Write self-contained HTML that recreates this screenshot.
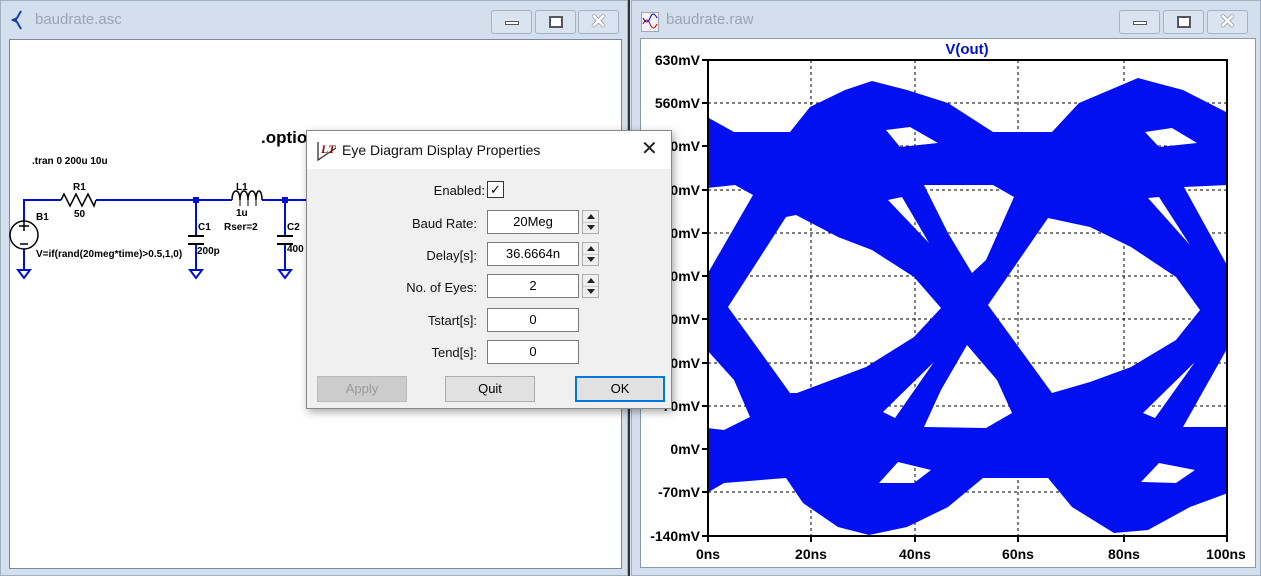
<!DOCTYPE html>
<html><head><meta charset="utf-8"><style>
*{margin:0;padding:0;box-sizing:border-box}
body{width:1261px;height:576px;overflow:hidden;background:#d5e1ee;font-family:"Liberation Sans",sans-serif;position:relative}
.win{position:absolute;top:0;height:576px;background:#d3dfec;border:1px solid #9fb0c3}
.title{position:absolute;top:10px;font-size:15px;color:#9aa5b2}
.btn{position:absolute;top:9px;width:41px;height:24px;border:1px solid #a3b2c4;border-radius:3px;background:#d9e4f0}
.client{position:absolute;background:#fff;border:1px solid #7a8a9a}
.lbl{position:absolute;font-size:13px;color:#111;text-align:right;width:170px;left:0}
.inp{position:absolute;left:180px;width:92px;height:24px;background:#fff;border:1px solid #7a7a7a;font-size:13px;text-align:center;line-height:22px}
.spin{position:absolute;left:275px;width:17px;height:24px;border:1px solid #adadad;background:#f0f0f0}
.spin:before{content:"";position:absolute;left:4px;top:3px;border:4px solid transparent;border-bottom:5px solid #222;border-top:0}
.spin:after{content:"";position:absolute;left:4px;bottom:3px;border:4px solid transparent;border-top:5px solid #222;border-bottom:0}
.spin i{position:absolute;left:0;right:0;top:11px;border-top:1px solid #ccc}
.db{position:absolute;top:245px;width:90px;height:26px;border:1px solid #adadad;background:#e1e1e1;font-size:13px;text-align:center;line-height:24px}
.yl{position:absolute;right:561px;font:bold 14px "Liberation Sans",sans-serif;color:#000}
.xl{position:absolute;top:546px;font:bold 14px "Liberation Sans",sans-serif;color:#000;width:60px;text-align:center}
</style></head><body>

<!-- left window -->
<div class="win" style="left:0;width:628px">
 <svg style="position:absolute;left:10px;top:9px" width="16" height="20"><path d="M10 1 L6 8 L2 10 L6 12 L10 19" stroke="#1a3fb0" stroke-width="2" fill="none"/><path d="M1 10h5" stroke="#1a3fb0" stroke-width="2"/></svg>
 <div class="title" style="left:34px">baudrate.asc</div>
 <div class="btn" style="left:490px"><div style="position:absolute;left:13px;top:10px;width:14px;height:4px;border:1px solid #556;background:#fff"></div></div>
 <div class="btn" style="left:534px"><div style="position:absolute;left:13px;top:5px;width:14px;height:12px;border:2px solid #556;background:#fff"></div></div>
 <div class="btn" style="left:577px;font-size:20px;font-weight:bold;color:#fff;text-align:center;line-height:22px;text-shadow:0 0 1px #334,0 0 1px #334">✕</div>
 <div class="client" style="left:8px;top:38px;width:613px;height:530px"></div>
</div>
<svg width="621" height="568" style="position:absolute;left:0;top:0">
  <g stroke="#0010d0" stroke-width="2" fill="none">
   <path d="M24 221 V200 H61 M96 200 H232 M262 200 H310"/>
   <path d="M24 249 V270 M196 200 V236 M196 244 V270 M285 200 V236 M285 244 V270"/>
   <path d="M18 270 h12 l-6 8 z M190 270 h12 l-6 8 z M279 270 h12 l-6 8 z"/>
  </g>
  <path d="M61 200 l3 -6 l6 12 l6 -12 l6 12 l6 -12 l6 12 l2 -6" stroke="#000" stroke-width="1.5" fill="none"/>
  <path d="M232 200 c0 -12 8 -12 8 0 c0 -12 8 -12 8 0 c0 -12 8 -12 8 0 c0 -12 6 -12 6 0" stroke="#000" stroke-width="1.5" fill="none"/>
  <path d="M240 200 v6 M248 200 v6 M256 200 v6" stroke="#000" stroke-width="1"/>
  <circle cx="24" cy="235" r="14" stroke="#000" stroke-width="1.5" fill="none"/>
  <path d="M19 226h10M24 221v10M20 244h8" stroke="#000" stroke-width="1.5"/>
  <path d="M188 236h16M188 244h16M277 236h16M277 244h16" stroke="#000" stroke-width="2"/>
  <rect x="193" y="197" width="6" height="6" fill="#0010d0"/><rect x="282" y="197" width="6" height="6" fill="#0010d0"/>
  <g font-family="Liberation Sans" font-weight="bold" font-size="10" fill="#000">
   <text x="32" y="164">.tran 0 200u 10u</text>
   <text x="73" y="190">R1</text><text x="74" y="217">50</text>
   <text x="36" y="220">B1</text>
   <text x="236" y="190">L1</text><text x="236" y="216">1u</text><text x="224" y="230">Rser=2</text>
   <text x="198" y="230">C1</text><text x="197" y="254">200p</text>
   <text x="287" y="230">C2</text><text x="287" y="252">400</text>
   <text x="36" y="257">V=if(rand(20meg*time)&gt;0.5,1,0)</text>
   <text x="261" y="143" font-size="17">.optio</text>
  </g>
</svg>
<div style="position:absolute;left:628px;top:0;width:2px;height:576px;background:#333"></div>

<!-- right window -->
<div class="win" style="left:631px;width:630px">
 <svg style="position:absolute;left:9px;top:11px" width="18" height="20"><rect x="0.5" y="0.5" width="17" height="19" fill="#f3f3f8" stroke="#666" stroke-dasharray="1 1"/><path d="M2 12 q4 -8 7 0 t7 0" stroke="#c00" fill="none"/><path d="M2 6 q4 8 7 0 t7 0" stroke="#00c" fill="none"/></svg>
 <div class="title" style="left:34px">baudrate.raw</div>
 <div class="btn" style="left:487px"><div style="position:absolute;left:13px;top:10px;width:14px;height:4px;border:1px solid #556;background:#fff"></div></div>
 <div class="btn" style="left:531px"><div style="position:absolute;left:13px;top:5px;width:14px;height:12px;border:2px solid #556;background:#fff"></div></div>
 <div class="btn" style="left:575px;font-size:20px;font-weight:bold;color:#fff;text-align:center;line-height:22px;text-shadow:0 0 1px #334,0 0 1px #334">✕</div>
</div>
<div class="client" style="left:640px;top:38px;width:616px;height:530px;border-color:#8a9aa8"></div>

<svg style="position:absolute;left:0;top:0" width="1261" height="576">
 <g stroke="#000" stroke-width="1" stroke-dasharray="3 3">
  <path d="M811 60V536M915 60V536M1018 60V536M1124 60V536"/>
  <path d="M708 103H1227M708 146H1227M708 190H1227M708 233H1227M708 276H1227M708 319H1227M708 363H1227M708 406H1227M708 449H1227M708 492H1227"/>
 </g>
 <path fill="#0010f0" fill-rule="evenodd" d="
 M707 117 L734 132 L790 132 L810 107 L845 90 L872 81 L907 90 L948 103 L993 132 L1052 132 L1079 103 L1138 78 L1183 90 L1228 113
 L1228 493 L1190 507 L1148 530 L1114 533 L1072 507 L1048 478 L983 478 L948 507 L907 527 L869 535 L838 527 L803 503 L786 478 L724 483 L707 493 Z
 M728 307 L786 217 L796 215 L838 237 L872 250 L914 277 L941 308 L914 337 L866 367 L797 393 L790 393 Z
 M988 305 L1048 218 L1090 227 L1131 247 L1176 277 L1200 310 L1176 340 L1131 367 L1090 382 L1052 393 Z
 M924 185 L993 185 L1014 197 L986 260 L972 273 L948 233 Z
 M967 345 L997 380 L1012 413 L986 428 L924 427 L941 390 Z
 M888 200 L902 197 L929 243 Z M883 412 L934 362 L895 418 Z
 M1148 198 L1159 197 L1190 245 Z M1143 413 L1195 362 L1155 418 Z
 M707 188 L735 185 L753 195 L708 273 Z
 M707 350 L734 380 L750 417 L724 430 L707 428 Z
 M1184 187 L1228 185 L1228 267 Z
 M1228 347 L1228 427 L1183 427 Z
 M886 130 L910 127 L938 143 L900 147 Z M1145 132 L1172 128 L1197 143 L1159 147 Z
 M879 483 L898 462 L931 470 L914 483 Z M1141 482 L1159 463 L1195 470 L1176 483 Z"/>
 <rect x="708" y="60" width="519" height="476" fill="none" stroke="#000" stroke-width="2"/>
 <g stroke="#000" stroke-width="2">
  <path d="M702 60h6M702 103h6M702 146h6M702 190h6M702 233h6M702 276h6M702 319h6M702 363h6M702 406h6M702 449h6M702 492h6M702 536h6"/>
  <path d="M708 536v6M811 536v6M915 536v6M1018 536v6M1124 536v6M1227 536v6"/>
 </g>
 <text x="967" y="54" font-family="Liberation Sans" font-weight="bold" font-size="15" fill="#0010d0" text-anchor="middle">V(out)</text>
</svg>
<div class="yl" style="top:52px">630mV</div><div class="yl" style="top:95px">560mV</div>
<div class="yl" style="top:138px">490mV</div><div class="yl" style="top:182px">420mV</div>
<div class="yl" style="top:225px">350mV</div><div class="yl" style="top:268px">280mV</div>
<div class="yl" style="top:311px">210mV</div><div class="yl" style="top:355px">140mV</div>
<div class="yl" style="top:398px">70mV</div><div class="yl" style="top:441px">0mV</div>
<div class="yl" style="top:484px">-70mV</div><div class="yl" style="top:528px">-140mV</div>
<div class="xl" style="left:678px">0ns</div><div class="xl" style="left:781px">20ns</div><div class="xl" style="left:885px">40ns</div><div class="xl" style="left:988px">60ns</div><div class="xl" style="left:1094px">80ns</div><div class="xl" style="left:1196px">100ns</div>

<!-- dialog -->
<div style="position:absolute;left:306px;top:130px;width:366px;height:279px;background:#f0f0f0;border:1px solid #888;box-shadow:2px 3px 8px rgba(0,0,0,.35)">
 <div style="position:absolute;left:0;top:0;width:364px;height:38px;background:#fff">
  <svg style="position:absolute;left:9px;top:9px" width="22" height="22"><path d="M2 2 V20 L20 8" stroke="#333" stroke-width="1.3" fill="none"/><text x="5" y="13" font-family="Liberation Serif" font-style="italic" font-weight="bold" font-size="12" fill="#8a1010">LT</text></svg>
  <div style="position:absolute;left:35px;top:11px;font-size:14px;color:#111">Eye Diagram Display Properties</div>
  <div style="position:absolute;left:334px;top:5px;font-size:20px;color:#222">✕</div>
 </div>
 <div style="position:absolute;left:0;top:0;width:364px">
  <div class="lbl" style="top:52px;left:8px">Enabled:</div>
  <div style="position:absolute;left:180px;top:50px;width:17px;height:17px;border:1px solid #333;background:#fff;font-size:13px;line-height:15px;text-align:center">✓</div>
  <div class="lbl" style="top:85px">Baud Rate:</div><div class="inp" style="top:79px">20Meg</div><div class="spin" style="top:79px"><i></i></div>
  <div class="lbl" style="top:117px">Delay[s]:</div><div class="inp" style="top:111px">36.6664n</div><div class="spin" style="top:111px"><i></i></div>
  <div class="lbl" style="top:149px">No. of Eyes:</div><div class="inp" style="top:143px">2</div><div class="spin" style="top:143px"><i></i></div>
  <div class="lbl" style="top:182px">Tstart[s]:</div><div class="inp" style="top:177px">0</div>
  <div class="lbl" style="top:214px">Tend[s]:</div><div class="inp" style="top:209px">0</div>
  <div class="db" style="left:10px;color:#999;background:#ccc;border-color:#bbb">Apply</div>
  <div class="db" style="left:138px">Quit</div>
  <div class="db" style="left:268px;border:2px solid #0078d7;line-height:22px">OK</div>
 </div>
</div>
</body></html>
